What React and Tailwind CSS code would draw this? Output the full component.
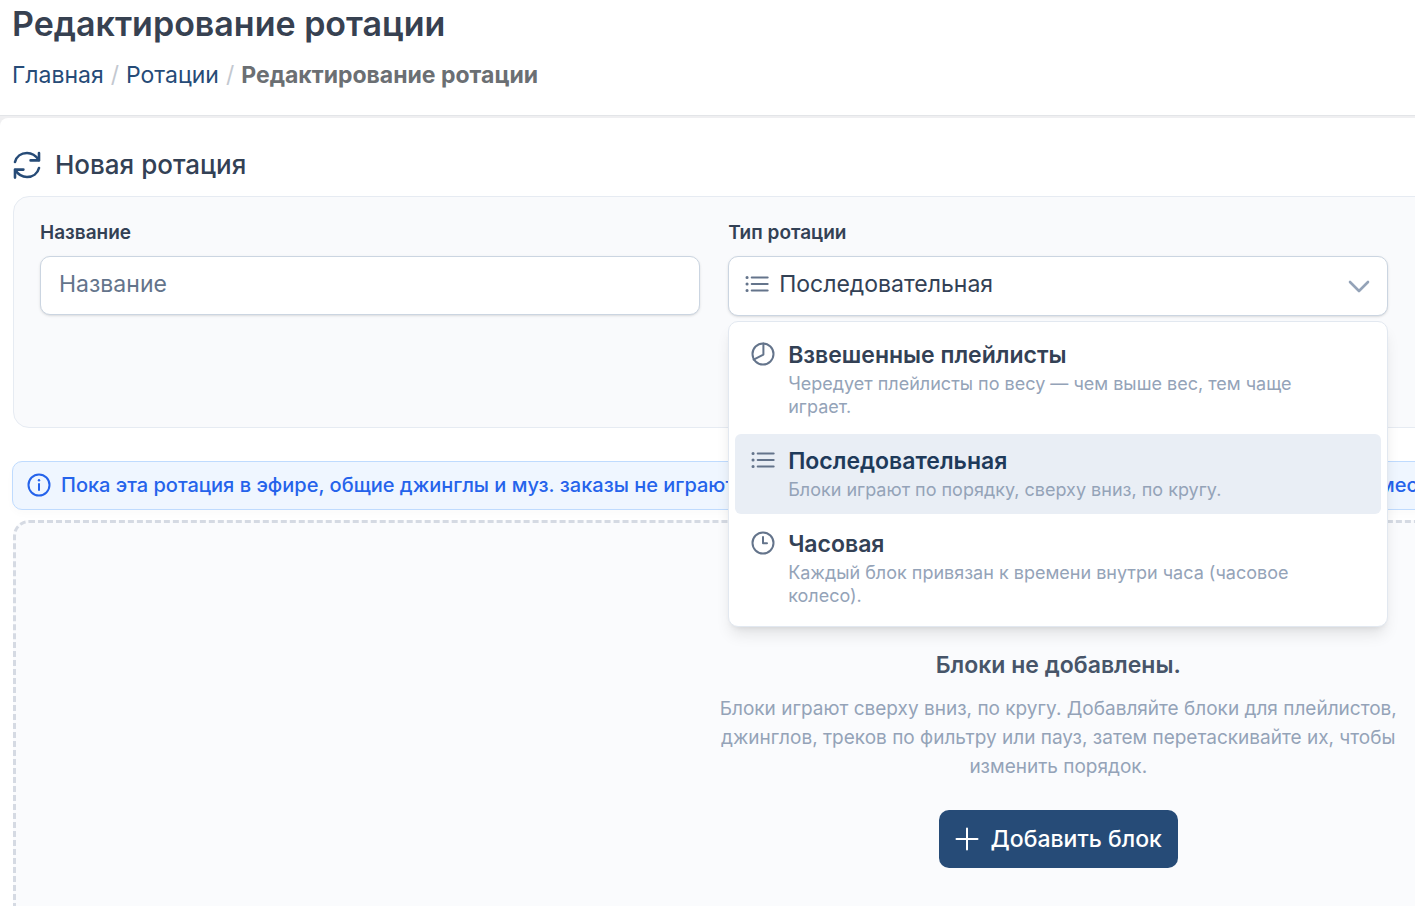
import { useState } from 'react'

function ListIcon() {
  return (
    <svg viewBox="0 0 24 24" className="size-6 shrink-0" fill="none" stroke="currentColor" strokeWidth="2.2" strokeLinecap="round" aria-hidden="true">
      <path d="M6.8 5.5H22.6M6.8 12H22.6M6.8 18.5H22.6" />
      <path strokeWidth="3" d="M2 5.5h.1M2 12h.1M2 18.5h.1" />
    </svg>
  )
}

function PieIcon() {
  return (
    <svg viewBox="0 0 24 24" className="size-6 shrink-0" fill="none" stroke="currentColor" strokeWidth="2" strokeLinecap="round" strokeLinejoin="round" aria-hidden="true">
      <circle cx="12" cy="12" r="10.5" />
      <path d="M12.4 1.5V12.6L2.6 17.6" />
    </svg>
  )
}

function ClockIcon() {
  return (
    <svg viewBox="0 0 24 24" className="size-6 shrink-0" fill="none" stroke="currentColor" strokeWidth="2" strokeLinecap="round" strokeLinejoin="round" aria-hidden="true">
      <circle cx="12" cy="12" r="10.5" />
      <path d="M12 6V12.3H16" />
    </svg>
  )
}

function InfoIcon() {
  return (
    <svg viewBox="0 0 24 24" className="size-6 shrink-0" fill="none" stroke="currentColor" strokeWidth="2" strokeLinecap="round" aria-hidden="true">
      <circle cx="12" cy="12" r="10.5" />
      <path d="M12 11V17" />
      <path strokeWidth="2.4" d="M12 7.2v.1" />
    </svg>
  )
}

function SyncIcon() {
  return (
    <svg viewBox="0 0 28 28" className="size-7 shrink-0 text-[#264b77]" fill="none" stroke="currentColor" strokeWidth="2.6" strokeLinecap="round" strokeLinejoin="round" aria-hidden="true">
      <path d="M2 11C3.4 5.5 8 2 14 2C19.2 2 23 4.8 25.8 9" />
      <path d="M26 2V9.4H17.6" />
      <path d="M26 17C24.6 22.5 20 26 14 26C8.8 26 5 23.3 2.2 19" />
      <path d="M2 26.6V18.6H10.4" />
    </svg>
  )
}

const TYPES = [
  {
    id: 'weighted',
    name: 'Взвешенные плейлисты',
    text: 'Чередует плейлисты по весу — чем выше вес, тем чаще играет.',
    Icon: PieIcon,
  },
  {
    id: 'sequential',
    name: 'Последовательная',
    text: 'Блоки играют по порядку, сверху вниз, по кругу.',
    Icon: ListIcon,
  },
  {
    id: 'hourly',
    name: 'Часовая',
    text: 'Каждый блок привязан к времени внутри часа (часовое колесо).',
    Icon: ClockIcon,
  },
]

function TypeSelect() {
  const [value, setValue] = useState('sequential')
  const [open, setOpen] = useState(true)
  const { Icon } = TYPES.find(t => t.id === value)

  return (
    <div className="relative">
      <div className="flex h-15 items-center gap-2.5 rounded-[10px] border border-[#cbd5e1] bg-white px-4 pb-1 shadow-sm">
        <span className="flex text-[#64748b]"><Icon /></span>
        <select
          id="rotation-type"
          value={value}
          onChange={e => setValue(e.target.value)}
          onClick={() => setOpen(!open)}
          className="min-w-0 flex-1 appearance-none bg-transparent text-[23px] leading-7 text-[#334155] outline-none"
        >
          {TYPES.map(t => <option key={t.id} value={t.id}>{t.name}</option>)}
        </select>
        <svg viewBox="0 0 24 24" className="size-6 shrink-0 text-[#94a3b8]" fill="none" stroke="currentColor" strokeWidth="2.6" strokeLinecap="round" strokeLinejoin="round" aria-hidden="true">
          <path d="M3 10L12 19L21 10" />
        </svg>
      </div>

      {open && (
        <div role="listbox" aria-label="Тип ротации" className="absolute inset-x-0 top-full z-10 mt-[5px] flex flex-col gap-[3px] rounded-[10px] border border-[#e2e8f0] bg-white p-1.5 shadow-lg">
          {TYPES.map(({ id, name, text, Icon: TypeIcon }) => (
            <button
              key={id}
              type="button"
              role="option"
              aria-selected={id === value}
              onClick={() => { setValue(id); setOpen(false) }}
              className={`flex items-start gap-[13px] rounded-md px-4 pt-3 pb-[13px] text-left ${
                id === value ? 'bg-[#e9eef5] text-[#1e3a5a]' : 'text-[#334155]'
              }`}
            >
              <span className="mt-0.5 flex text-[#64748b]"><TypeIcon /></span>
              <span className="flex flex-1 flex-col gap-px pr-16">
                <span className="text-[23px] leading-[31px] font-semibold">{name}</span>
                <span className="text-lg leading-[23px] text-[#94a3b8]">{text}</span>
              </span>
            </button>
          ))}
        </div>
      )}
    </div>
  )
}

export default function App() {
  const [name, setName] = useState('')

  return (
    <div className="h-screen overflow-hidden bg-[#efeff1] font-['Inter',sans-serif]">
      {/* Page header */}
      <header className="border-b border-[#e3e5e8] bg-white px-3 pt-1 pb-[25px]">
        <h1 className="text-[34px] leading-10 font-semibold text-[#374151]">Редактирование ротации</h1>
        <nav aria-label="Навигация" className="mt-4 flex gap-[7px] text-[23px] leading-[30px]">
          <a href="#home" className="text-[#264b77]">Главная</a>
          <span className="text-[#c3c8d0]">/</span>
          <a href="#rotations" className="text-[#264b77]">Ротации</a>
          <span className="text-[#c3c8d0]">/</span>
          <span className="font-bold text-[#6b6f73]">Редактирование ротации</span>
        </nav>
      </header>

      {/* The form is wider than the window and runs off to the right */}
      <main className="mt-0.5 w-[150%] rounded-tl-lg bg-white pt-[31px] pr-[19px] pb-10 pl-[13px]">
        <h2 className="flex items-center gap-3.5 text-[26px] leading-8 font-medium text-[#334155]">
          <SyncIcon />
          Новая ротация
        </h2>

        <section className="mt-[15px] grid grid-cols-3 gap-7 rounded-2xl border border-[#e6ebf2] bg-[#f9fafc] px-[26px] pt-[22px] pb-[111px]">
          <div>
            <label htmlFor="rotation-name" className="mb-[9px] block text-[19px] leading-7 font-semibold text-[#334155]">Название</label>
            <input
              id="rotation-name"
              type="text"
              placeholder="Название"
              value={name}
              onChange={e => setName(e.target.value)}
              className="h-[59px] w-full rounded-[10px] border border-[#cbd5e1] bg-white px-[18px] pb-1 text-[23px] text-[#334155] shadow-sm outline-none placeholder:text-[#64748b]"
            />
          </div>
          <div>
            <label htmlFor="rotation-type" className="mb-[9px] block text-[19px] leading-7 font-semibold text-[#334155]">Тип ротации</label>
            <TypeSelect />
          </div>
        </section>

        {/* Air notice */}
        <div className="-mx-px mt-[33px] flex h-[49px] items-center gap-2.5 rounded-[10px] border border-[#bfdbfe] bg-[#eff6ff] px-3.5 pb-0.5 text-[20px] font-medium text-[#2563eb] shadow-[0_4px_8px_rgba(0,0,0,0.02)]">
          <InfoIcon />
          <p>Пока эта ротация в эфире, общие джинглы и муз. заказы не играют. Ставьте их обычными блоками этой ротации в нужные для вас места.</p>
        </div>

        {/* Empty state */}
        <section className="mt-2.5 flex flex-col items-center rounded-2xl border-3 border-dashed border-[#d5dae3] bg-[#fafbfd] pt-[126px] pb-20">
          <h3 className="text-[23px] leading-8 font-semibold text-[#475569]">Блоки не добавлены.</h3>
          <p className="mt-[13px] max-w-[700px] text-center text-[19px] leading-[29px] text-[#94a3b8]">
            Блоки играют сверху вниз, по кругу. Добавляйте блоки для плейлистов, джинглов, треков по фильтру или пауз, затем перетаскивайте их, чтобы изменить порядок.
          </p>
          <button type="button" className="mt-[29px] flex h-[58px] items-center gap-3 rounded-[10px] bg-[#264b77] px-4 text-[23px] font-medium text-white">
            <svg viewBox="0 0 24 24" className="size-6" fill="none" stroke="currentColor" strokeWidth="2" strokeLinecap="round" aria-hidden="true">
              <path d="M12 1.5V22.5M1.5 12H22.5" />
            </svg>
            Добавить блок
          </button>
        </section>
      </main>
    </div>
  )
}
